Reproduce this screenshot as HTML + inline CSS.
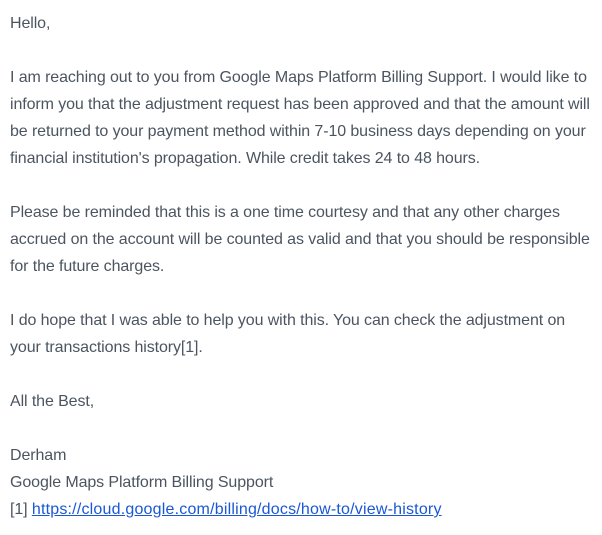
<!DOCTYPE html>
<html><head><style>
body{margin:0;background:#fff;}
.t{position:absolute;left:10px;font-family:"Liberation Sans",sans-serif;font-size:16px;color:#4b5560;white-space:nowrap;letter-spacing:-0.1px;line-height:27px;}
a{color:#1a57d6;text-decoration:underline;letter-spacing:0.2px;}
</style></head><body>
<div class="t" style="top:10px">Hello,</div>
<div class="t" style="top:64px">I am reaching out to you from Google Maps Platform Billing Support. I would like to<br>inform you that the adjustment request has been approved and that the amount will<br>be returned to your payment method within 7-10 business days depending on your<br>financial institution's propagation. While credit takes 24 to 48 hours.</div>
<div class="t" style="top:199px">Please be reminded that this is a one time courtesy and that any other charges<br>accrued on the account will be counted as valid and that you should be responsible<br>for the future charges.</div>
<div class="t" style="top:307px">I do hope that I was able to help you with this. You can check the adjustment on<br>your transactions history[1].</div>
<div class="t" style="top:388px">All the Best,</div>
<div class="t" style="top:442px">Derham<br>Google Maps Platform Billing Support<br>[1] <a>https://cloud.google.com/billing/docs/how-to/view-history</a></div>
</body></html>
